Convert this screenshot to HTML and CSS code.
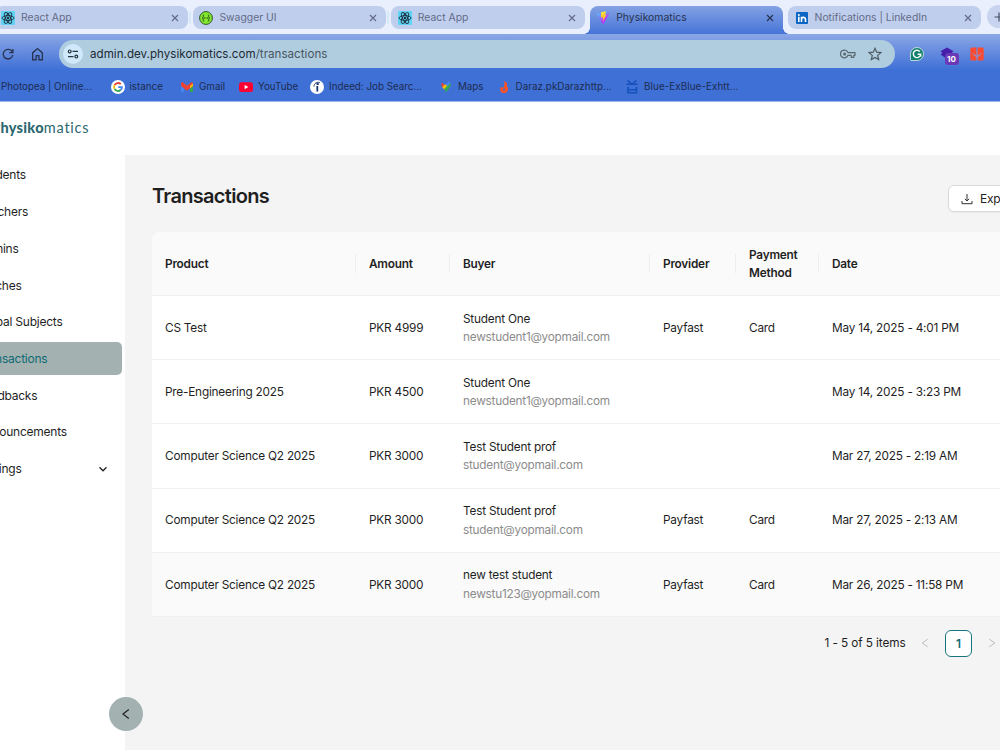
FILE: index.html
```html
<!DOCTYPE html>
<html lang="en">
<head>
<meta charset="utf-8">
<title>Physikomatics</title>
<link rel="stylesheet" href="styles.css">
</head>
<body>
<svg class="defs" width="0" height="0">
  <defs>
    <symbol id="close" viewBox="0 0 8 8"><path d="M1 1l6 6M7 1L1 7" stroke="currentColor" stroke-width="1.2" fill="none"/></symbol>
    <symbol id="react" viewBox="0 0 14 14"><rect width="14" height="14" rx="1" fill="#5ed3f3"/><g fill="none" stroke="#1d2b3a" stroke-width=".9"><ellipse cx="7" cy="7" rx="6" ry="2.4"/><ellipse cx="7" cy="7" rx="6" ry="2.4" transform="rotate(60 7 7)"/><ellipse cx="7" cy="7" rx="6" ry="2.4" transform="rotate(120 7 7)"/></g><circle cx="7" cy="7" r="1.2" fill="#1d2b3a"/></symbol>
    <linearGradient id="bolt" x1="0" y1="0" x2="0" y2="1"><stop offset="0" stop-color="#ffe83a"/><stop offset="1" stop-color="#ff9f1c"/></linearGradient>
    <linearGradient id="vite" x1="0" y1="0" x2="1" y2="1"><stop offset="0" stop-color="#41d1ff"/><stop offset=".6" stop-color="#bd34fe"/></linearGradient>
  </defs>
</svg>
<div class="browser">
  <div class="tabs">
    <div class="tab first"><svg class="fav" viewBox="0 0 14 14"><use href="#react"/></svg><span>React App</span><svg class="x"><use href="#close"/></svg></div>
    <div class="tab"><svg class="fav" viewBox="0 0 14 14"><circle cx="7" cy="7" r="6.4" fill="#85ea2d" stroke="#2c5530" stroke-width="1"/><path d="M5.2 3.8c-1.3 0-.9.8-.9 1.700 0 1-.3 1.500-1 1.500.7 0 1 .5 1 1.500 0 .9-.4 1.700.9 1.700M8.800 3.800c1.300 0 .9.800.9 1.700 0 1 .3 1.500 1 1.500-.7 0-1 .5-1 1.500 0 .9.4 1.700-.9 1.700" fill="none" stroke="#1d3b20" stroke-width=".9"/><path d="M5 7h4" stroke="#1d3b20" stroke-width="1.1" stroke-dasharray="1 .5"/></svg><span>Swagger UI</span><svg class="x"><use href="#close"/></svg></div>
    <div class="tab"><svg class="fav" viewBox="0 0 14 14"><use href="#react"/></svg><span>React App</span><svg class="x"><use href="#close"/></svg></div>
    <div class="tab active"><svg class="fav" viewBox="0 0 14 14"><path d="M.5 2.200L7 13.500l6.500-11.300L7 3.500z" fill="url(#vite)"/><path d="M5 1.200l5-.9-.9 3.400 1.500-.3-3.900 7.600.5-4.500H5z" fill="url(#bolt)"/></svg><span>Physikomatics</span><svg class="x"><use href="#close"/></svg></div>
    <div class="tab"><svg class="fav" viewBox="0 0 14 14"><rect x="1" y="1" width="12" height="12" rx="1" fill="#0a66c2"/><circle cx="3.800" cy="3.900" r="1" fill="#fff"/><path d="M3.800 5.800v5.200M6.500 5.800v5.200M6.500 8.200c0-2.400 4-2.500 4 0v2.800" stroke="#fff" stroke-width="1.600" fill="none"/></svg><span>Notifications | LinkedIn</span><svg class="x"><use href="#close"/></svg></div>
    <div class="newtab"><svg viewBox="0 0 10 10" width="10" height="10"><path d="M5 .5v9M.5 5h9" stroke="#454d63" stroke-width="1.200"/></svg></div>
  </div>
  <div class="toolbar">
    <svg class="reload" viewBox="0 0 12 12"><path d="M10.200 3.700A4.800 4.800 0 1 0 10.800 7M10.900 1v3.600H7.300" fill="none" stroke="#27334f" stroke-width="1.300"/></svg>
    <svg class="home" viewBox="0 0 12 12"><path d="M1.500 5v6.300h3.200V7.500h2.600v3.800h3.200V5L6 1z" fill="none" stroke="#27334f" stroke-width="1.200"/></svg>
    <div class="omnibox">
      <div class="site"><svg viewBox="0 0 12 12" width="12" height="12"><g fill="none" stroke="#27363f" stroke-width="1.200"><circle cx="2.700" cy="3.400" r="1.400"/><path d="M5.500 3.400H11M1 8.600h5.500"/><circle cx="9.300" cy="8.600" r="1.400"/></g></svg></div>
      <span class="url">admin.dev.physikomatics.com<i>/transactions</i></span>
      <svg class="key" viewBox="0 0 16 10"><path d="M8 3.600h7v2.700h-1.200v2h-2.600v-2H8A3.900 3.900 0 1 1 8 3.600z" stroke-linejoin="round" fill="none" stroke="#59676e" stroke-width="1.200"/><circle cx="4.600" cy="5" r="1.500" fill="#59676e"/></svg>
      <svg class="star" viewBox="0 0 14 14"><path d="M7 1.300l1.700 3.900 4.200.4-3.200 2.800 1 4.200L7 10.400l-3.700 2.200 1-4.200L1.100 5.600l4.200-.4z" fill="none" stroke="#4e5c64" stroke-width="1.200"/></svg>
    </div>
    <svg class="ext gram" viewBox="0 0 14 14"><path d="M1 .5h6A6.500 6.500 0 1 1 .5 7V1z" transform="matrix(1 0 0 -1 0 14)" fill="#12806a" stroke="#dceee9" stroke-width=".8"/><path d="M9.900 4.600A3.700 3.700 0 1 0 10.700 7.200H7.600M10.700 7v2.700" fill="none" stroke="#fff" stroke-width="1.400"/></svg>
    <div class="ext purple"><svg viewBox="0 0 14 14" width="14" height="14"><path d="M7 .5l6.500 3.800L11.500 6l2 1.500L7 12 .5 7.500 2.500 6l-2-1.700z" fill="#4520ad"/><path d="M2.500 6L7 9l4.500-3" fill="none" stroke="#30108c" stroke-width=".8"/></svg><b>10</b></div>
    <svg class="ext red" viewBox="0 0 14 14"><rect x=".3" y=".5" width="13.400" height="13" rx="1.500" fill="#fb4b32"/><path d="M7 0v4M7 11v3" stroke="#668ade" stroke-width="1.300"/><path d="M7 4v6.500M3.300 6.500C3.600 8.300 6 8.300 7 10.500 8 8.300 10.400 8.300 10.700 6.500" fill="none" stroke="#8f8fc8" stroke-width="1.200"/></svg>
  </div>
  <div class="marks">
    <div class="mark m0"><span>Photopea | Online...</span></div>
    <div class="mark m1"><svg viewBox="0 0 14 14"><circle cx="7" cy="7" r="7" fill="#fff"/><g fill="none" stroke-width="1.800"><path d="M9.800 4.200A3.900 3.900 0 0 0 3.600 5" stroke="#ea4335"/><path d="M3.600 5a4 4 0 0 0 0 4" stroke="#fbbc05"/><path d="M3.600 9a3.900 3.900 0 0 0 6 1" stroke="#34a853"/><path d="M9.600 10A4 4 0 0 0 10.900 7.200H7.200" stroke="#4285f4"/></g></svg><span>istance</span></div>
    <div class="mark m2"><svg viewBox="0 0 14 14"><path d="M1 3v9h3V6z" fill="#4285f4"/><path d="M13 3v9h-3V6z" fill="#34a853"/><path d="M1 3v3l6 4.700L13 6V3l-1.500-.9L7 5.700 2.500 2.100z" fill="#ea4335"/><path d="M10 6l3-2.500V6l-3 2.300z" fill="#fbbc04"/></svg><span>Gmail</span></div>
    <div class="mark m3"><svg viewBox="0 0 14 14"><rect x="0" y="2.200" width="14" height="9.800" rx="2.500" fill="#ff0033"/><path d="M5.600 4.900v4.400L9.400 7.100z" fill="#fff"/></svg><span>YouTube</span></div>
    <div class="mark m4"><svg viewBox="0 0 14 14"><circle cx="7" cy="7" r="7" fill="#fff"/><path d="M7.300 6v5.500" stroke="#17336f" stroke-width="1.800"/><circle cx="7.600" cy="3.900" r="1.200" fill="#17336f"/><path d="M4 6.500C4.200 3.500 6.500 1.600 9.800 2.600" fill="none" stroke="#17336f" stroke-width="1"/></svg><span>Indeed: Job Searc...</span></div>
    <div class="mark m5"><svg viewBox="0 0 14 14"><path d="M11.600 3.500C12.500 8 7.800 9 7 13.300 6.800 11 5.500 9.700 4.600 8.700L10.500 2z" fill="#34a853"/><path d="M3 2.500L5.600 5 3.500 7.500C2.300 6 2.200 4 3 2.500z" fill="#ea4335"/><path d="M3.300 7.200L6 4.200 8.500 5.600 5 9.300z" fill="#fbbc04"/><path d="M6.500 4.800L10.400.9l1.200 2.400L8.500 6z" fill="#4285f4"/></svg><span>Maps</span></div>
    <div class="mark m6"><svg viewBox="0 0 14 14"><path d="M7 1l3 2v3.500c2 1.500 1.500 6-2.500 6.500C3.500 13.500 2.300 9.500 4 6.700L6 8c1.500-1.500 2-4 1-7z" fill="#ff5126"/><circle cx="7" cy="9.600" r="1.100" fill="#3f70d6"/></svg><span>Daraz.pkDarazhttp...</span></div>
    <div class="mark m7"><svg viewBox="0 0 14 14"><path d="M2.500.5C4.500 1 5 4.200 8 4.200h4.500M11.500.5C9.500 1 9 4.200 6 4.200H1.500M3 6.800v6h8.500v-6M3 9.700h8" fill="none" stroke="#1550bd" stroke-width="1.500"/></svg><span>Blue-ExBlue-Exhtt...</span></div>
  </div>
</div>
<header class="brand"><b>Physiko</b><span>matics</span></header>
<div class="app">
  <nav class="side">
    <a>Students</a><a>Teachers</a><a>Admins</a><a>Batches</a><a>Global Subjects</a><a class="on">Transactions</a><a>Feedbacks</a><a>Announcements</a>
    <a>Settings<svg viewBox="0 0 10 10" width="10" height="10"><path d="M1.500 3.200L5 6.800l3.500-3.600" fill="none" stroke="#222" stroke-width="1.300"/></svg></a>
  </nav>
  <main class="main">
    <div class="head"><h1>Transactions</h1>
      <button class="export"><svg viewBox="0 0 12 12" width="12" height="12"><path d="M6 1v7M3.800 5.800L6 8l2.200-2.200M1 8v2.700h10V8" fill="none" stroke="#333" stroke-width="1"/></svg><span>Export</span></button></div>
    <table>
      <colgroup><col class="c1"><col class="c2"><col class="c3"><col class="c4"><col class="c5"><col></colgroup>
      <thead><tr><th>Product</th><th>Amount</th><th>Buyer</th><th>Provider</th><th>Payment<br>Method</th><th>Date</th></tr></thead>
      <tbody>
        <tr><td>CS Test</td><td>PKR 4999</td><td>Student One<small>newstudent1@yopmail.com</small></td><td>Payfast</td><td>Card</td><td>May 14, 2025 - 4:01 PM</td></tr>
        <tr><td>Pre-Engineering 2025</td><td>PKR 4500</td><td>Student One<small>newstudent1@yopmail.com</small></td><td></td><td></td><td>May 14, 2025 - 3:23 PM</td></tr>
        <tr><td>Computer Science Q2 2025</td><td>PKR 3000</td><td>Test Student prof<small>student@yopmail.com</small></td><td></td><td></td><td>Mar 27, 2025 - 2:19 AM</td></tr>
        <tr><td>Computer Science Q2 2025</td><td>PKR 3000</td><td>Test Student prof<small>student@yopmail.com</small></td><td>Payfast</td><td>Card</td><td>Mar 27, 2025 - 2:13 AM</td></tr>
        <tr class="hover"><td>Computer Science Q2 2025</td><td>PKR 3000</td><td>new test student<small>newstu123@yopmail.com</small></td><td>Payfast</td><td>Card</td><td>Mar 26, 2025 - 11:58 PM</td></tr>
      </tbody>
    </table>
    <div class="pager"><span>1 - 5 of 5 items</span>
      <svg viewBox="0 0 8 10" width="8" height="10"><path d="M6.800 1.200L1.200 5l5.600 3.800" fill="none" stroke="#bdbdbd"/></svg>
      <b>1</b>
      <svg viewBox="0 0 8 10" width="8" height="10"><path d="M1.200 1.200L6.800 5 1.200 8.800" fill="none" stroke="#bdbdbd"/></svg></div>
  </main>
</div>
<button class="collapse"><svg viewBox="0 0 10 12" width="10" height="12"><path d="M7.800 1.500L2 6l5.800 4.500" fill="none" stroke="#222" stroke-width="1.200"/></svg></button>
</body>
</html>
```
FILE: styles.css
```css
* { box-sizing: border-box; }
body { margin: 0; width: 1000px; height: 750px; overflow: hidden; background: #fff; color: #1f1f1f; font: 11.800px/18.400px Inter, sans-serif; }
svg { flex: none; display: block; }
.defs { position: absolute; }
.browser { height: 102px; background: linear-gradient(#8ba7e6 34px, #3f70d6 70px, #3f70d6 100.500px, #9db8ee 101px); overflow: hidden; }
.tabs { display: flex; height: 34px; padding-top: 6px; background: #e9effd; gap: 5px; }
.tab { width: 193.400px; flex: none; height: 23px; border-radius: 8px; background: #c0ceed; display: flex; align-items: center; padding: 0 9px 0 6.500px; color: #626b87; font-size: 10.400px; position: relative; }
.tab.first { margin-left: -5.500px; }
.tab + .tab:not(.active)::before { content: ""; position: absolute; left: -4px; top: 5px; width: 2px; height: 13px; background: #d5eaf9; }
.active + .tab.tab::before { display: none; }
.fav { width: 14px; height: 14px; margin-right: 6px; }
.tab span { flex: 1; white-space: nowrap; padding-top: 1px; }
.x { width: 8px; height: 8px; }
.tab.active { height: 28px; border-radius: 8px 8px 0 0; background: linear-gradient(#84a2e4, #4674d7); color: #27334f; padding-bottom: 5px; }
.tab.active::before, .tab.active::after { content: ""; position: absolute; bottom: 0; width: 6px; height: 6px; }
.tab.active::before { left: -6px; background: radial-gradient(circle at 0 0, transparent 5.500px, #4674d7 6px); }
.tab.active::after { right: -6px; background: radial-gradient(circle at 100% 0, transparent 5.500px, #4674d7 6px); }
.newtab { width: 23px; height: 23px; margin: -1px 0 0 1px; flex: none; border-radius: 50%; background: #c8d4ef; display: flex; align-items: center; justify-content: center; }
.toolbar { height: 39px; display: flex; align-items: center; }
.reload { width: 12px; height: 12px; margin-left: 2px; }
.home { width: 13px; height: 14px; margin-left: 17px; }
.omnibox { margin-left: 15px; width: 835.500px; height: 28px; border-radius: 14px; background: #b0ccdf; display: flex; align-items: center; padding: 0 13px 0 4px; flex: none; }
.site { width: 20px; height: 20px; border-radius: 50%; background: #d0e9fa; display: flex; align-items: center; justify-content: center; }
.url { flex: 1; margin-left: 7px; font-size: 11.600px; letter-spacing: .020px; color: #1d2a33; padding-top: 1px; }
.url i { font-style: normal; color: #48565f; }
.key { width: 16px; height: 10px; margin-right: 12px; }
.star { width: 14px; height: 14px; }
.ext { flex: none; }
.gram { width: 14px; height: 14px; margin-left: 15px; }
.purple { width: 14px; height: 14px; margin-left: 16px; position: relative; }
.purple b { position: absolute; left: 5px; top: 6px; width: 14px; height: 12px; border-radius: 3px; background: #6a39b5; color: #fff; font-size: 8px; line-height: 12px; text-align: center; }
.red { width: 14px; height: 14px; margin-left: 16px; }
.marks { display: flex; height: 27px; align-items: center; font-size: 9.800px; color: #1d2c50; }
.mark { display: flex; align-items: center; flex: none; white-space: nowrap; }
.mark span { padding-top: 2px; }
.mark svg { width: 14px; height: 14px; margin-right: 5px; }
.m0 { width: 109.500px; margin-left: 1px; }
.m1 { width: 69.500px; }
.m2 { width: 59px; }
.m3 { width: 71px; }
.m4 { width: 129px; }
.m5 { width: 57.500px; }
.m6 { width: 128.500px; letter-spacing: .060px; }
.m7 { letter-spacing: .100px; }
.brand { height: 53px; margin-left: -9px; line-height: 52px; color: #2c6870; font-size: 14.500px; font-family: Lato, sans-serif; letter-spacing: .300px; white-space: nowrap; }
.brand b { font-weight: 900; }
.brand span { letter-spacing: .750px; }
.app { display: flex; height: 595px; }
.side { width: 185px; margin-left: -60px; flex: none; padding: 3.500px 3.500px 0 0; font-size: 12px; letter-spacing: -.240px; }
.side a { display: flex; align-items: center; justify-content: space-between; height: 33.300px; margin-bottom: 3.400px; padding: 1px 14px 0 37.500px; border-radius: 5px; }
.side .on { background: #a3b2b1; color: #0f6a73; }
.main { flex: 1; min-width: 0; background: #f4f4f4; padding: 26px 0 0 27px; overflow: hidden; }
.head { display: flex; justify-content: space-between; height: 51px; }
h1 { margin: 0; font-size: 20px; line-height: 31px; font-weight: 600; letter-spacing: -.700px; }
.export { display: flex; align-items: center; gap: 7px; height: 27px; width: 80px; margin: 4px -28px 0 0; padding: 0 12px; border: 1px solid #d9d9d9; border-radius: 6px; background: #fff; font: 12px Inter, sans-serif; letter-spacing: -.200px; color: #222; box-shadow: 0 1px 1px #0000000a; flex: none; }
table { table-layout: fixed; border-collapse: separate; border-spacing: 0; width: 900px; background: #fff; border-radius: 8px 0 0 0; overflow: hidden; letter-spacing: -.210px; }
.c1 { width: 204px; } .c2 { width: 94px; } .c3 { width: 200px; } .c4 { width: 86px; } .c5 { width: 83px; }
th { height: 64px; padding: 1px 0 0 13px; text-align: left; font-weight: 600; background: #fafafa; border-bottom: 1px solid #f0f0f0; position: relative; }
th:not(:last-child)::after { content: ""; position: absolute; right: 0; top: 22px; width: 1px; height: 19px; background: #eee; }
td { height: 64.200px; padding: 1px 0 0 13px; border-bottom: 1px solid #f0f0f0; white-space: nowrap; }
small { display: block; font-size: 11.800px; color: #8c8c8c; letter-spacing: -.240px; }
.hover td { background: #fafafa; }
.pager { display: flex; align-items: center; margin: 13px 0 0 672.500px; height: 27px; width: 190px; letter-spacing: -.100px; }
.pager span { width: 96.500px; }
.pager b { width: 27px; height: 27px; margin: 0 16px; border: 1px solid #177580; border-radius: 6px; background: #fff; color: #0f6a73; font-weight: 600; line-height: 26px; text-align: center; flex: none; }
.collapse { position: absolute; left: 109px; top: 697px; width: 34px; height: 34px; border: 0; border-radius: 50%; background: #a3b2b1; display: flex; align-items: center; justify-content: center; padding: 0; }
```
